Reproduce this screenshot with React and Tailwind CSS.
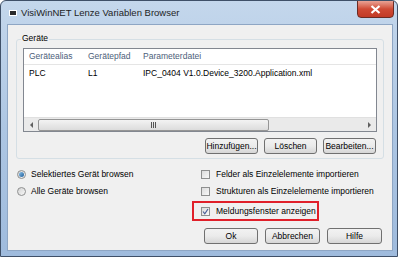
import React from "react";

function WinButton({ children, className = "" }) {
    return (
        <div
            className={`h-[16px] flex items-center justify-center rounded-[3px] border border-[#707070] bg-gradient-to-b from-[#f2f2f2] via-[#ebebeb] to-[#d6d6d6] text-[#000] ${className}`}
        >
            {children}
        </div>
    );
}

function Radio({ checked, label }) {
    return (
        <div className="h-[17px] flex items-center gap-[5px]">
            <div className="w-[9px] h-[9px] rounded-full border border-[#8e8f8f] bg-gradient-to-br from-[#d4d4d4] to-[#f7f7f7] flex items-center justify-center">
                {checked && (
                    <div className="w-[5px] h-[5px] rounded-full bg-gradient-to-br from-[#8bc1e9] to-[#1c5e99]" />
                )}
            </div>
            <span className="whitespace-nowrap">{label}</span>
        </div>
    );
}

function Check({ checked, label, className = "" }) {
    return (
        <div className={`h-[17px] flex items-center gap-[6px] ${className}`}>
            <div className="w-[9px] h-[9px] border border-[#8e8f8f] bg-gradient-to-br from-[#dcdcdc] to-[#f8f8f8] flex items-center justify-center">
                {checked && (
                    <svg width="7" height="7" viewBox="0 0 7 7">
                        <path d="M1 3.5 L2.8 5.8 L6 1" stroke="#4a5f97" strokeWidth="1.2" fill="none" />
                    </svg>
                )}
            </div>
            <span className="whitespace-nowrap">{label}</span>
        </div>
    );
}

export default function App() {
    return (
        <div
            className="w-[398px] h-[257px] flex flex-col rounded-t-[6px] border border-[#3f5068] bg-gradient-to-b from-[#c4d7ec] via-[#adc6e3] to-[#9fbbdd] text-[8.5px] text-black overflow-hidden"
            style={{ fontFamily: '"Liberation Sans", Arial, sans-serif' }}
        >
            {/* Title bar */}
            <div className="h-[22px] flex items-start">
                <div className="mt-[9px] ml-[8px] w-[8px] h-[6px] bg-[#2b2b2b] border border-white" />
                <span className="mt-[5px] ml-[4px] text-[9.5px] text-[#1e1e1e]">VisiWinNET Lenze Variablen Browser</span>
                <div className="ml-auto mr-[3px] mt-[-1px] w-[37px] h-[18px] rounded-b-[4px] border border-[#6b2b24] bg-gradient-to-b from-[#e8a295] via-[#cf4a35] to-[#c23a26] flex items-center justify-center">
                    <svg width="11" height="9" viewBox="0 0 11 9">
                        <path d="M1.5 1 L9.5 8 M9.5 1 L1.5 8" stroke="#fff" strokeWidth="2.2" />
                    </svg>
                </div>
            </div>

            {/* Client area */}
            <div className="flex-1 ml-[6px] mr-[4px] mb-[5px] mt-[1px] bg-[#f0f0f0] border border-[#8ea6c4] flex flex-col">
                {/* Geräte group */}
                <div className="relative mt-[14px] mx-[8px] h-[120px] border border-[#d5dfe5] rounded-[3px] flex flex-col px-[6px] pt-[8px]">
                    <span className="absolute top-[-8px] left-[4px] px-[1px] bg-[#f0f0f0]">Geräte</span>
                    <div className="h-[84px] border border-[#828790] bg-white flex flex-col">
                        <div className="h-[16px] flex items-center border-b border-[#e5e5e5] text-[#4c607a]">
                            <span className="ml-[5px] w-[59px]">Gerätealias</span>
                            <span className="w-[55px]">Gerätepfad</span>
                            <span>Parameterdatei</span>
                        </div>
                        <div className="h-[17px] flex items-center">
                            <span className="ml-[5px] w-[59px]">PLC</span>
                            <span className="w-[55px]">L1</span>
                            <span>IPC_0404 V1.0.Device_3200.Application.xml</span>
                        </div>
                        <div className="flex-1" />
                        {/* Horizontal scrollbar */}
                        <div className="h-[14px] flex items-center bg-[#eaeaea] border-t border-[#e0e0e0]">
                            <div className="w-[14px] flex justify-center">
                                <div className="w-0 h-0 border-y-[3px] border-y-transparent border-r-[3px] border-r-[#606060]" />
                            </div>
                            <div className="w-[231px] h-[12px] rounded-[2px] border border-[#959595] bg-gradient-to-b from-[#f3f3f3] to-[#dcdcdc] flex items-center justify-center">
                                <div className="flex gap-[1px]">
                                    <div className="w-[1px] h-[6px] bg-[#555]" />
                                    <div className="w-[1px] h-[6px] bg-[#555]" />
                                    <div className="w-[1px] h-[6px] bg-[#555]" />
                                </div>
                            </div>
                            <div className="flex-1" />
                            <div className="w-[14px] flex justify-center">
                                <div className="w-0 h-0 border-y-[3px] border-y-transparent border-l-[3px] border-l-[#606060]" />
                            </div>
                        </div>
                    </div>
                    <div className="mt-[6px] flex justify-end gap-[6px] pr-[1px]">
                        <WinButton className="w-[53px]">Hinzufügen...</WinButton>
                        <WinButton className="w-[53px]">Löschen</WinButton>
                        <WinButton className="w-[53px]">Bearbeiten...</WinButton>
                    </div>
                </div>

                {/* Options */}
                <div className="mt-[7px] flex">
                    <div className="ml-[9px] w-[184px] shrink-0 flex flex-col">
                        <Radio checked label="Selektiertes Gerät browsen" />
                        <Radio label="Alle Geräte browsen" />
                    </div>
                    <div className="flex flex-col">
                        <Check label="Felder als Einzelelemente importieren" />
                        <Check label="Strukturen als Einzelelemente importieren" />
                        <div className="ml-[-9px] mt-[1px] w-[127px] h-[20px] border-2 border-[#e0202a] pl-[7px] flex items-center">
                            <Check checked label="Meldungsfenster anzeigen" />
                        </div>
                    </div>
                </div>

                {/* Dialog buttons */}
                <div className="mt-[7px] flex justify-end gap-[7px] mr-[10px]">
                    <WinButton className="w-[54px]">Ok</WinButton>
                    <WinButton className="w-[55px]">Abbrechen</WinButton>
                    <WinButton className="w-[55px]">Hilfe</WinButton>
                </div>
            </div>
        </div>
    );
}
